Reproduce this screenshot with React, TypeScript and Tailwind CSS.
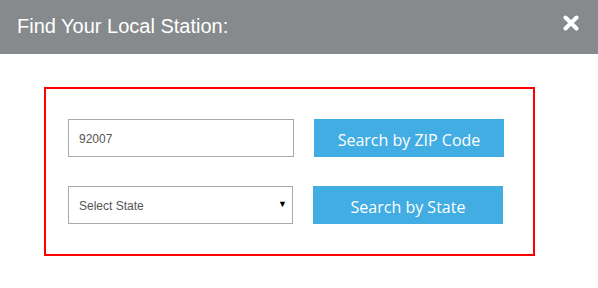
import React, { useState } from 'react'

const App = () => {
  const [zip, setZip] = useState('92007')
  const [state, setState] = useState('')

  return (
    <div className="w-[598px] h-[288px] bg-white font-['Liberation_Sans',Arial,sans-serif]">
      <div className="flex h-[54px] items-center justify-between bg-[#878a8c] pl-[17px] pr-[19px]">
        <h2 className="text-[20px] leading-none text-white pb-[2px]">Find Your Local Station:</h2>
        <button className="mb-[8px] flex h-4 w-4 items-center justify-center text-white" aria-label="Close">
          <svg width="16" height="16" viewBox="0 0 16 16">
            <path d="M2.5 2.5 L13.5 13.5 M13.5 2.5 L2.5 13.5" stroke="#fff" strokeWidth="4" strokeLinecap="round" />
          </svg>
        </button>
      </div>
      <div className="pl-[44px] pt-[33px]">
        <div className="flex h-[169px] w-[491px] flex-col gap-[29px] border-2 border-[#ff0000] pl-[22px] pt-[30px]">
          <div className="flex items-center gap-[20px]">
            <input
              value={zip}
              onChange={(e) => setZip(e.target.value)}
              className="h-[38px] w-[226px] border border-[#a9a9a9] px-[10px] pt-[1px] text-[12px] text-[#555] outline-none"
            />
            <button className="h-[38px] w-[190px] bg-[#41ade2] pt-[3px] font-['Open_Sans',sans-serif] text-[16px] text-white">
              Search by ZIP Code
            </button>
          </div>
          <div className="flex items-center gap-[20px]">
            <div className="relative h-[38px] w-[225px]">
              <select
                value={state}
                onChange={(e) => setState(e.target.value)}
                className="h-full w-full appearance-none border border-[#a9a9a9] bg-white px-[10px] pt-[1px] text-[12px] text-[#555] outline-none"
              >
                <option value="">Select State</option>
                <option value="CA">California</option>
                <option value="NY">New York</option>
              </select>
              <span className="pointer-events-none absolute right-[6px] top-[14px] text-[9px] leading-none text-black">▼</span>
            </div>
            <button className="h-[38px] w-[190px] bg-[#41ade2] pt-[3px] font-['Open_Sans',sans-serif] text-[16px] text-white">
              Search by State
            </button>
          </div>
        </div>
      </div>
    </div>
  )
}

export default App
